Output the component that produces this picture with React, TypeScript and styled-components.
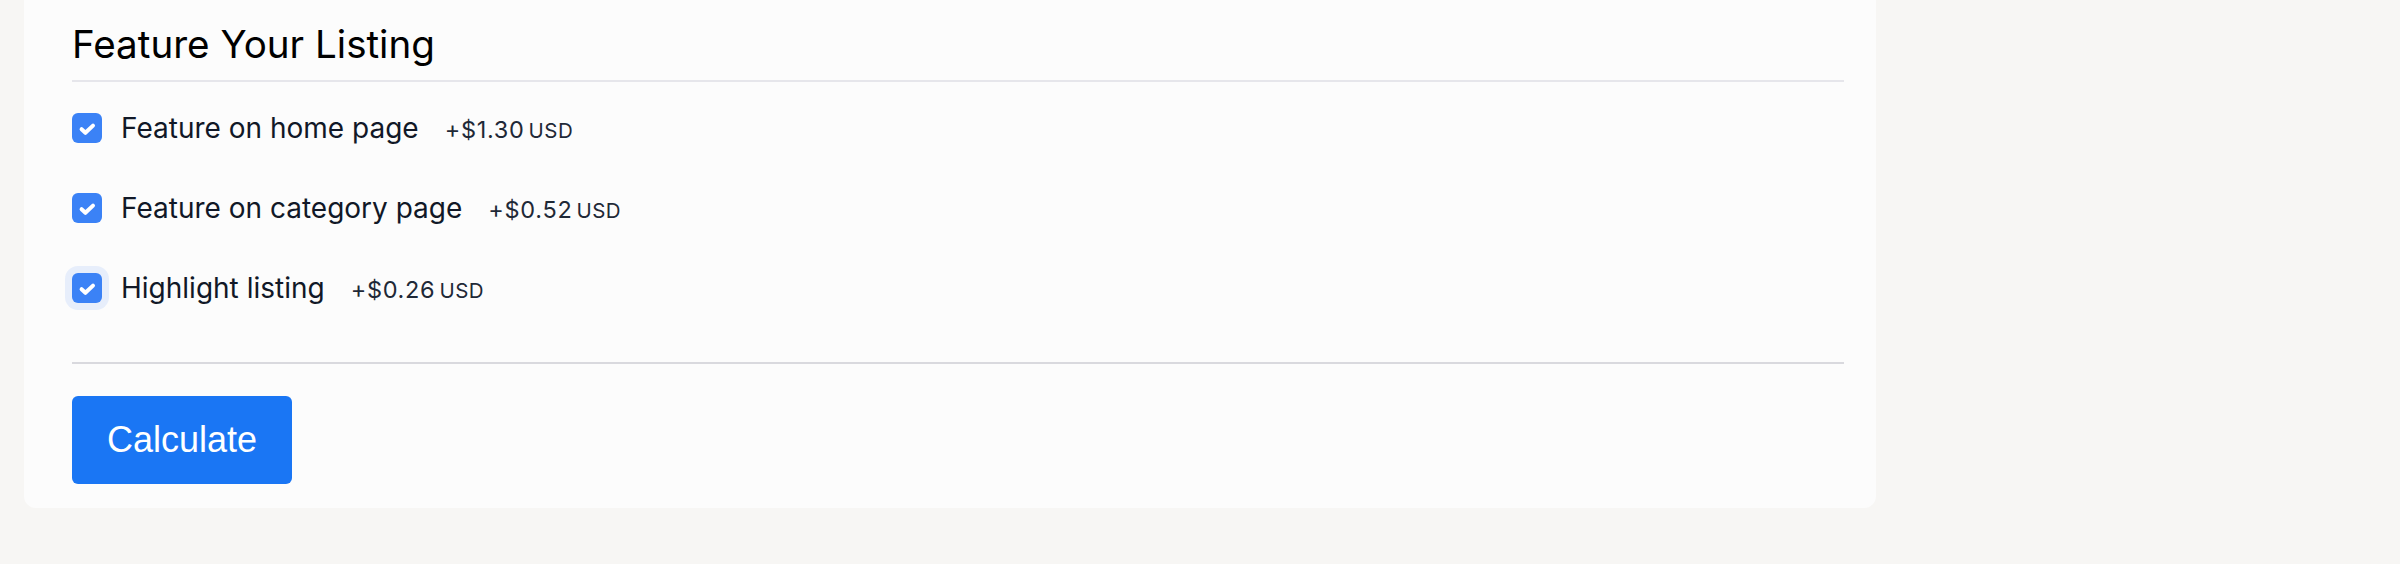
import React from "react";
import styled, { createGlobalStyle } from "styled-components";

const GlobalStyle = createGlobalStyle`
  body {
    margin: 0;
    background-color: #f7f6f4;
    font-family: Inter, "Noto Sans", sans-serif;
  }
`;

const Page = styled.div`
  padding: 0 24px 56px;
`;

const Card = styled.section`
  width: 1852px;
  box-sizing: border-box;
  margin-top: -16px;
  padding: 37px 32px 24px 48px;
  background-color: #fcfcfc;
  border-radius: 12px;
`;

const Title = styled.h2`
  margin: 0;
  padding-bottom: 13px;
  border-bottom: 2px solid #e6e6eb;
  font-size: 38.6px;
  line-height: 46px;
  font-weight: 400;
  color: #000;
`;

const Options = styled.div`
  padding-top: 6px;
`;

const Row = styled.label`
  height: 80px;
  display: flex;
  align-items: center;
  gap: 19px;
  cursor: pointer;
`;

const Box = styled.span<{ $focused?: boolean }>`
  width: 30px;
  height: 30px;
  flex: none;
  display: flex;
  align-items: center;
  justify-content: center;
  background-color: #3b82f6;
  border-radius: 6px;
  box-shadow: ${(p) => (p.$focused ? "0 0 0 7px #e7eefb" : "none")};
`;

const Text = styled.span`
  display: flex;
  align-items: baseline;
`;

const Label = styled.span`
  font-size: 28px;
  line-height: 34px;
  color: #111827;
`;

const Price = styled.span`
  margin-left: 26px;
  font-size: 23.5px;
  letter-spacing: 0.7px;
  color: #1f2937;
`;

const Currency = styled.span`
  margin-left: 4px;
  font-size: 20.5px;
  letter-spacing: 0.5px;
`;

const Footer = styled.div`
  margin-top: 34px;
  padding-top: 32px;
  border-top: 2px solid #d9d9de;
`;

const Button = styled.button`
  height: 88px;
  padding: 0 35px;
  border: none;
  border-radius: 6px;
  background-color: #1a76f4;
  color: #fff;
  font-family: "Liberation Sans", Arial, sans-serif;
  font-size: 36px;
  cursor: pointer;
`;

const options = [
  { label: "Feature on home page", price: "+$1.30" },
  { label: "Feature on category page", price: "+$0.52" },
  { label: "Highlight listing", price: "+$0.26", focused: true },
];

function Check() {
  return (
    <svg width="30" height="30" viewBox="0 0 30 30" fill="none">
      <polyline
        points="9.6,16.2 13.4,19.8 21,12.6"
        stroke="#fff"
        strokeWidth="4"
        strokeLinecap="round"
        strokeLinejoin="round"
      />
    </svg>
  );
}

export default function App() {
  return (
    <Page>
      <GlobalStyle />
      <Card>
        <Title>Feature Your Listing</Title>
        <Options>
          {options.map((o) => (
            <Row key={o.label}>
              <Box $focused={o.focused}>
                <Check />
              </Box>
              <Text>
                <Label>{o.label}</Label>
                <Price>
                  {o.price}
                  <Currency>USD</Currency>
                </Price>
              </Text>
            </Row>
          ))}
        </Options>
        <Footer>
          <Button type="button">Calculate</Button>
        </Footer>
      </Card>
    </Page>
  );
}
